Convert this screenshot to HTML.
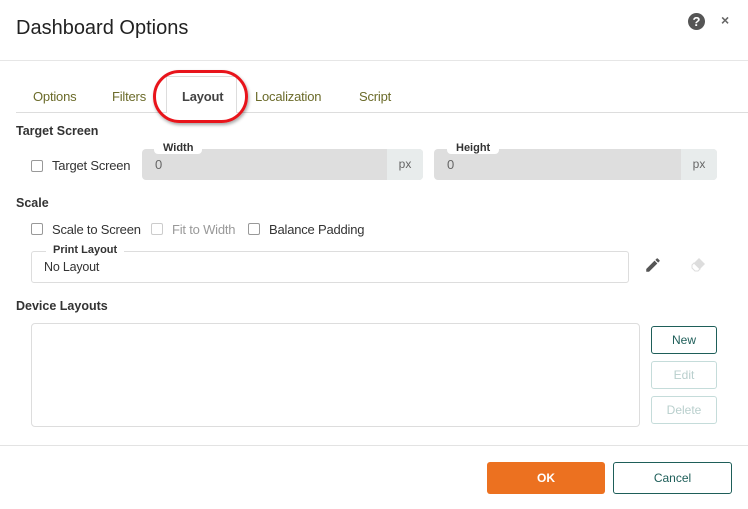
<!DOCTYPE html>
<html><head><style>
*{box-sizing:border-box;margin:0;padding:0}
body{width:748px;height:509px;background:#fff;font-family:"Liberation Sans",sans-serif;position:relative;overflow:hidden;color:#333}
.a{position:absolute}
.t{font-size:13px;color:#333;letter-spacing:-0.2px}
.b{font-weight:bold;font-size:12.5px;color:#333}
.cb{position:absolute;width:12px;height:12px;border:1px solid #999;border-radius:2px;background:#fff}
.inp{position:absolute;background:#dedede;border-radius:4px;height:31px}
.px{position:absolute;right:0;top:0;width:36px;height:31px;background:#e8ecec;border-radius:0 4px 4px 0;font-size:12px;color:#666;text-align:center;line-height:31px}
.lbl{position:absolute;background:#fff;font-size:11px;font-weight:bold;padding:0 9px;height:12px;line-height:12px;border-radius:0 0 4px 4px}
.btn{position:absolute;border:1px solid #1e5e59;border-radius:3px;text-align:center;font-size:12px;color:#1e5e59}
.dis{border-color:#c5dcda;color:#b9cfcd}
</style></head><body>
<div class="a" style="left:16px;top:17px;font-size:20px;color:#222">Dashboard Options</div>
<div class="a" style="left:688px;top:13px;width:17px;height:17px;border-radius:50%;background:#555;color:#fff;font-size:13px;font-weight:bold;text-align:center;line-height:17px">?</div>
<div class="a" style="left:721px;top:12px;font-size:14px;color:#666;font-weight:bold">×</div>
<div class="a" style="left:0;top:60px;width:748px;height:1px;background:#e6e6e6"></div>
<div class="a" style="left:16px;top:112px;width:732px;height:1px;background:#ddd"></div>
<div class="a" style="left:166px;top:76px;width:71px;height:37px;background:#fff;border:1px solid #ddd;border-bottom:none"></div>
<div class="a t" style="left:33px;top:89px;color:#6b6b2a">Options</div>
<div class="a t" style="left:112px;top:89px;color:#6b6b2a">Filters</div>
<div class="a t" style="left:182px;top:89px;font-weight:bold;color:#444">Layout</div>
<div class="a t" style="left:255px;top:89px;color:#6b6b2a">Localization</div>
<div class="a t" style="left:359px;top:89px;color:#6b6b2a">Script</div>
<div class="a" style="left:153px;top:70px;width:95px;height:53px;border:3px solid #e8141b;border-radius:30px;box-shadow:1px 2px 3px rgba(0,0,0,.35)"></div>
<div class="a b" style="left:16px;top:124px">Target Screen</div>
<div class="cb" style="left:31px;top:160px"></div>
<div class="a t" style="left:52px;top:158px">Target Screen</div>
<div class="inp" style="left:142px;top:149px;width:281px"><span class="a t" style="left:13px;top:8px;color:#666">0</span><div class="px">px</div></div>
<div class="lbl" style="left:154px;top:142px">Width</div>
<div class="inp" style="left:434px;top:149px;width:283px"><span class="a t" style="left:13px;top:8px;color:#666">0</span><div class="px">px</div></div>
<div class="lbl" style="left:447px;top:142px">Height</div>
<div class="a b" style="left:16px;top:196px">Scale</div>
<div class="cb" style="left:31px;top:223px"></div>
<div class="a t" style="left:52px;top:222px">Scale to Screen</div>
<div class="cb" style="left:151px;top:223px;border-color:#ccc"></div>
<div class="a t" style="left:172px;top:222px;color:#999">Fit to Width</div>
<div class="cb" style="left:248px;top:223px"></div>
<div class="a t" style="left:269px;top:222px">Balance Padding</div>
<div class="a" style="left:31px;top:251px;width:598px;height:32px;border:1px solid #ddd;border-radius:3px"></div>
<div class="a" style="left:46px;top:244px;background:#fff;font-size:11px;font-weight:bold;padding:0 7px">Print Layout</div>
<div class="a t" style="left:44px;top:260px;font-size:12.5px">No Layout</div>
<svg class="a" style="left:644px;top:256px" width="18" height="18" viewBox="0 0 24 24"><path d="M3 17.25V21h3.75L17.8 9.94l-3.75-3.75L3 17.25zM20.7 7.04a1 1 0 000-1.41l-2.34-2.34a1 1 0 00-1.41 0l-1.83 1.83 3.75 3.75 1.83-1.83z" fill="#555"/></svg>
<svg class="a" style="left:689px;top:256px" width="18" height="18" viewBox="0 0 18 18"><path d="M10 2l6 6-5 5-6-6z" fill="#ddd"/><path d="M5 7l6 6-2 2H6L3 12V9z" fill="#fff" stroke="#ddd"/></svg>
<div class="a b" style="left:16px;top:299px">Device Layouts</div>
<div class="a" style="left:31px;top:323px;width:609px;height:104px;border:1px solid #ddd;border-radius:4px"></div>
<div class="btn" style="left:651px;top:326px;width:66px;height:28px;line-height:26px">New</div>
<div class="btn dis" style="left:651px;top:361px;width:66px;height:28px;line-height:26px">Edit</div>
<div class="btn dis" style="left:651px;top:396px;width:66px;height:28px;line-height:26px">Delete</div>
<div class="a" style="left:0;top:445px;width:748px;height:1px;background:#e3e3e3"></div>
<div class="a" style="left:487px;top:462px;width:118px;height:32px;background:#ec7120;border-radius:3px;color:#fff;font-weight:bold;font-size:12px;text-align:center;line-height:32px">OK</div>
<div class="btn" style="left:613px;top:462px;width:119px;height:32px;line-height:30px">Cancel</div>
</body></html>
